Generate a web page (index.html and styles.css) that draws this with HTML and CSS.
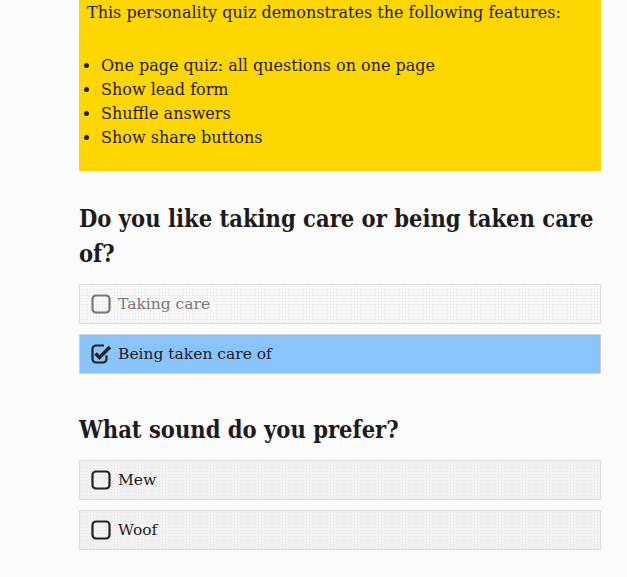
FILE: index.html
```html
<!DOCTYPE html>
<html>
<head>
<meta charset="utf-8">
<link rel="stylesheet" href="styles.css">
</head>
<body>
<main class="quiz">
  <section class="intro">
    <p>This personality quiz demonstrates the following features:</p>
    <ul>
      <li>One page quiz: all questions on one page</li>
      <li>Show lead form</li>
      <li>Shuffle answers</li>
      <li>Show share buttons</li>
    </ul>
  </section>

  <section class="question">
    <h2>Do you like taking care or being taken care of?</h2>
    <div class="answer faded">
      <svg class="box" viewBox="0 0 20 20"><rect x="1.5" y="1.5" width="17" height="17" rx="3.5" fill="none" stroke="currentColor" stroke-width="2.2"/></svg>
      <span>Taking care</span>
    </div>
    <div class="answer checked">
      <svg class="box" viewBox="0 0 20 20"><path d="M15.5 11.5 V15 a3.5 3.5 0 0 1 -3.5 3.5 H5 a3.5 3.5 0 0 1 -3.5 -3.5 V5 a3.5 3.5 0 0 1 3.5 -3.5 H13" fill="none" stroke="currentColor" stroke-width="2.2"/><path d="M4.5 9.5 L8.5 13.5 L19 3" fill="none" stroke="currentColor" stroke-width="3.6" stroke-linejoin="miter"/></svg>
      <span>Being taken care of</span>
    </div>
  </section>

  <section class="question">
    <h2>What sound do you prefer?</h2>
    <div class="answer">
      <svg class="box" viewBox="0 0 20 20"><rect x="1.5" y="1.5" width="17" height="17" rx="3.5" fill="none" stroke="currentColor" stroke-width="2.2"/></svg>
      <span>Mew</span>
    </div>
    <div class="answer">
      <svg class="box" viewBox="0 0 20 20"><rect x="1.5" y="1.5" width="17" height="17" rx="3.5" fill="none" stroke="currentColor" stroke-width="2.2"/></svg>
      <span>Woof</span>
    </div>
  </section>
</main>
</body>
</html>
```
FILE: styles.css
```css
html, body {
  margin: 0;
  padding: 0;
  background: #fcfcfc;
}
body {
  font-family: "DejaVu Serif", "Liberation Serif", serif;
  color: #1c1c1c;
}
.quiz {
  width: 522px;
  margin-left: 79px;
}
.intro {
  background: #ffd700;
  padding: 0 8px 21px 8px;
  font-size: 16px;
  line-height: 24px;
}
.intro p {
  margin: 0 0 29px 0;
  padding-top: 1px;
}
.intro ul {
  margin: 0;
  padding-left: 14px;
}
.question {
  margin-top: 31px;
}
.question + .question {
  margin-top: 39px;
}
.question h2 {
  font-family: "DejaVu Serif Condensed", "DejaVu Serif", serif;
  font-size: 23.5px;
  line-height: 35px;
  font-weight: bold;
  margin: 0 0 12px 0;
}
.answer {
  display: flex;
  align-items: center;
  gap: 7px;
  height: 38px;
  padding-left: 11px;
  border: 1px solid #dcdcdc;
  background-color: #f2f2f2;
  background-image: radial-gradient(#e4e4e4 0.6px, transparent 0.8px);
  background-size: 3px 3px;
  margin-bottom: 10px;
  font-size: 15.5px;
}
.answer .box {
  width: 20px;
  height: 20px;
  flex: none;
  color: #222;
}
.answer.faded {
  color: #777;
  background-color: #f8f8f8;
}
.answer.faded .box {
  color: #777;
}
.answer.checked {
  background: #89c4fc;
  border-color: #d0d0d0;
}
```
